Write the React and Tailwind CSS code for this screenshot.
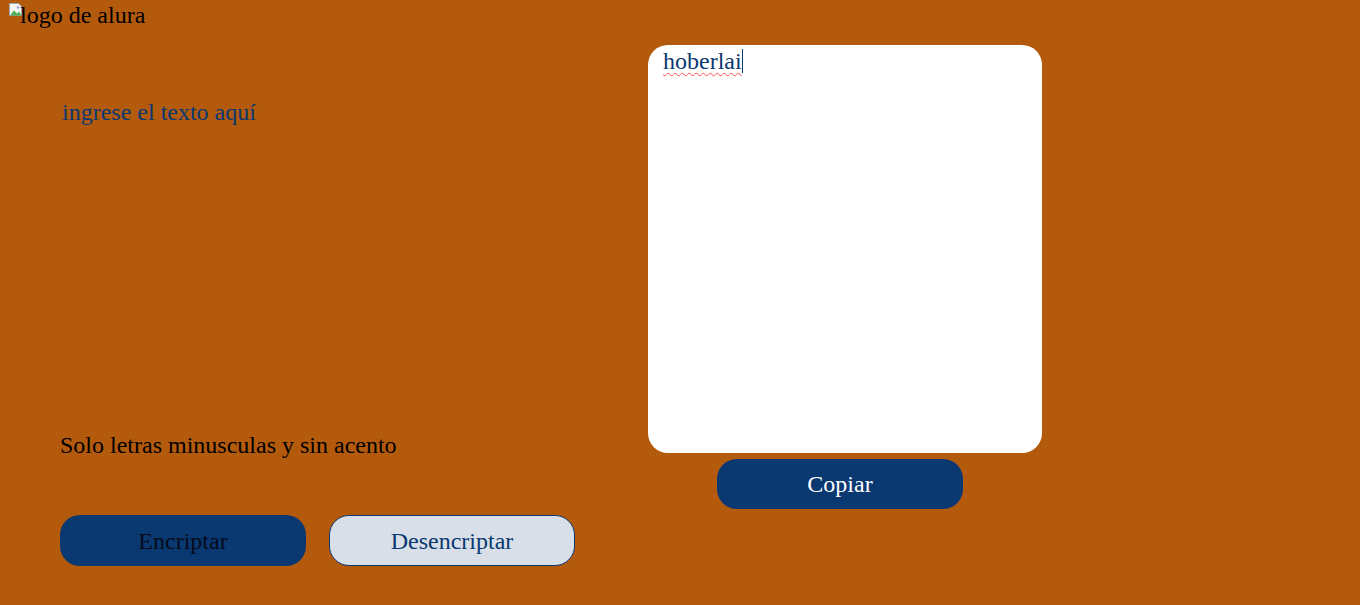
export default function App() {
  return (
    <div className="min-h-[605px] w-full bg-[#b45a0c] text-[24px] text-black" style={{ fontFamily: '"Liberation Serif", "Times New Roman", serif' }}>
      <div className="flex h-[27px] items-start leading-[27px]">
        <span className="ml-[8px] mt-[2px] inline-block">
          <svg width="16" height="16" viewBox="0 0 16 16">
            <path d="M1.5 1.5h9l3 3v9h-12z" fill="#f4f4f4" stroke="#9aa5b1" strokeWidth="1" />
            <path d="M2 13.5l4-5 3 3 2-2 2.5 4z" fill="#4caf50" />
            <circle cx="10" cy="5.5" r="1.3" fill="#9ad" />
          </svg>
        </span>
        <span className="-ml-[4px] pt-[2px]">logo de alura</span>
      </div>
      <div className="flex">
        <div className="flex w-[648px] flex-col pl-[60px]">
          <div className="mt-[72px] h-[300px] pl-[2px] leading-[27px] text-[#0a3871]">ingrese el texto aquí</div>
          <div className="mt-[33px] leading-[27px]">Solo letras minusculas y sin acento</div>
          <div className="mt-[56px] flex gap-[23px]">
            <button className="h-[51px] w-[246px] rounded-[20px] bg-[#0a3871] text-[24px] text-[#050b1a]">Encriptar</button>
            <button className="h-[51px] w-[246px] rounded-[20px] border border-[#0a3871] bg-[#d8dfe8] text-[24px] text-[#0a3871]">Desencriptar</button>
          </div>
        </div>
        <div className="flex flex-col">
          <div className="mt-[18px] h-[408px] w-[394px] rounded-[20px] bg-white pl-[15px] leading-[27px] text-[#0a3871]">
            <span className="underline decoration-wavy decoration-[#ff4d4d] decoration-1 underline-offset-[3px]">hoberlai</span>
            <span className="inline-block h-[24px] w-[1px] translate-y-[4px] bg-[#0a3871]"></span>
          </div>
          <button className="ml-[69px] mt-[6px] h-[50px] w-[246px] rounded-[20px] bg-[#0a3871] text-[24px] text-white">Copiar</button>
        </div>
      </div>
    </div>
  );
}
